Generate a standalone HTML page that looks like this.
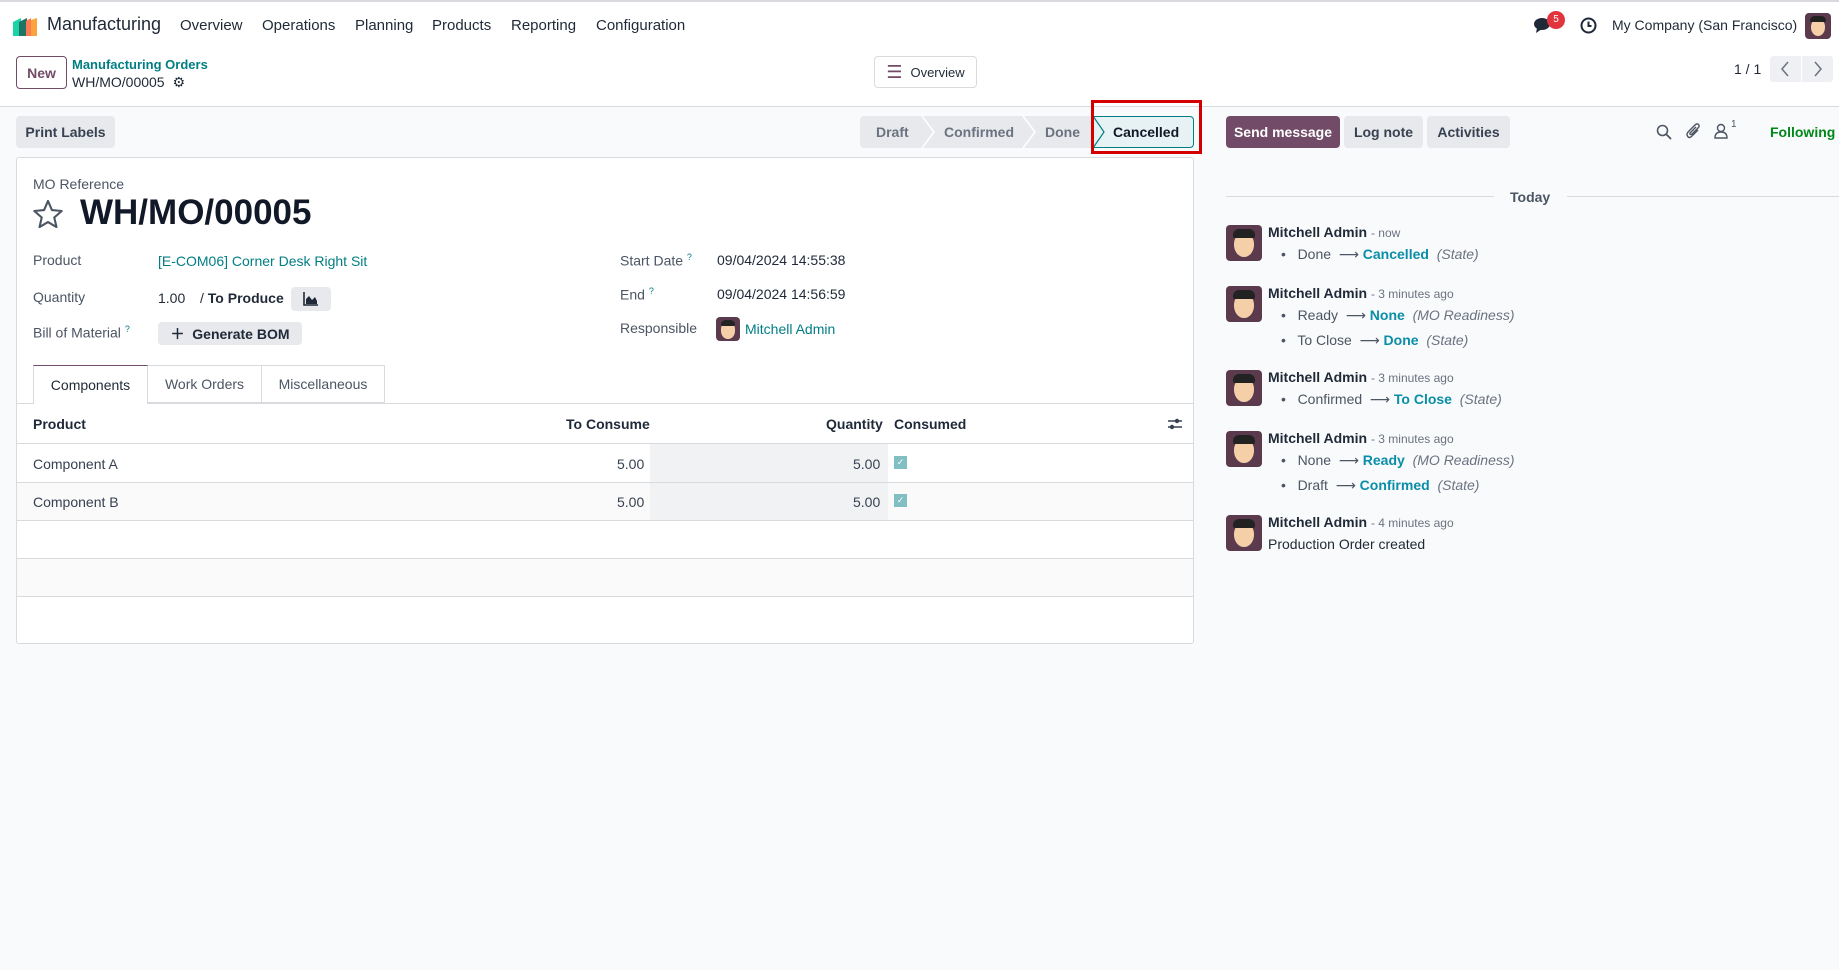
<!DOCTYPE html>
<html><head><meta charset="utf-8"><style>
*{box-sizing:border-box;margin:0;padding:0}
body{width:1839px;height:970px;overflow:hidden;font-family:"Liberation Sans","DejaVu Sans",sans-serif;font-size:14px;color:#374151;background:#f9fafb;position:relative}
.a{position:absolute;white-space:nowrap}
.top{position:absolute;left:0;top:0;width:1839px;height:107px;background:#fff;border-top:2px solid #d8dadd;border-bottom:1px solid #d8dadd}
.nav{top:17px;font-size:15px;color:#1f2937}
.btn{position:absolute;background:#e7e9ed;border-radius:4px;font-weight:bold;color:#374151;display:flex;align-items:center;justify-content:center;font-size:14px}
.link{color:#017e84}
.lbl{color:#4b5563;font-size:14px}
.sheet{position:absolute;left:16px;top:157px;width:1178px;height:487px;background:#fff;border:1px solid #d8dadd;border-radius:3px}
.hl{position:absolute;left:16px;width:1178px;height:1px;background:#d8dadd}
.av{position:absolute;width:36px;height:36px;border-radius:4px;background:#5b3a4e;overflow:hidden}
.av:after{content:"";position:absolute;left:22%;top:22%;width:56%;height:68%;border-radius:45% 45% 50% 50%;background:#f4cfa8}
.av:before{content:"";position:absolute;left:19%;top:11%;width:62%;height:25%;border-radius:6px 6px 2px 2px;background:#222;z-index:2}
.nm{font-weight:bold;color:#1f2937}
.tm{color:#6b7280}
.bl{color:#4b5563}
.bl b{color:#0a8ea8}
.bl i{color:#6b7280}
</style></head><body>
<div class="top"></div>
<svg class="a" style="left:13px;top:16px" width="28" height="20" viewBox="0 0 28 20"><path d="M0 6 L8 2 V20 H0Z" fill="#1ad3a7"/><path d="M6 6 L14 2 V20 H6Z" fill="#1e7464"/><path d="M13 5 L18 2 V20 H13Z" fill="#f97b51"/><path d="M18 4 L24 2 V20 H18Z" fill="#fca33d"/></svg>
<div class="a" style="left:47px;top:14px;font-size:18px;color:#1f2937">Manufacturing</div>
<div class="a nav" style="left:180px">Overview</div>
<div class="a nav" style="left:262px">Operations</div>
<div class="a nav" style="left:355px">Planning</div>
<div class="a nav" style="left:432px">Products</div>
<div class="a nav" style="left:511px">Reporting</div>
<div class="a nav" style="left:596px">Configuration</div>
<svg class="a" style="left:1534px;top:17px" width="20" height="17" viewBox="0 0 20 17"><ellipse cx="8" cy="7" rx="8" ry="6" fill="#1f2937"/><path d="M3 11 L2 16 L8 12Z" fill="#1f2937"/></svg>
<div class="a" style="left:1547px;top:11px;width:18px;height:18px;border-radius:9px;background:#e2343d;color:#fff;font-size:10px;text-align:center;line-height:18px">5</div>
<svg class="a" style="left:1580px;top:17px" width="17" height="17" viewBox="0 0 17 17"><circle cx="8.5" cy="8.5" r="7" fill="none" stroke="#1f2937" stroke-width="2"/><path d="M8.5 4.5V9H11.5" fill="none" stroke="#1f2937" stroke-width="2"/></svg>
<div class="a" style="left:1612px;top:17px;font-size:14px;color:#1f2937">My Company (San Francisco)</div>
<div class="av" style="left:1805px;top:13px;width:26px;height:26px"></div>
<div class="a" style="left:16px;top:56px;width:51px;height:33px;border:1px solid #714b67;border-radius:4px;color:#714b67;font-weight:bold;display:flex;align-items:center;justify-content:center">New</div>
<div class="a link" style="left:72px;top:57px;font-size:13px;font-weight:bold">Manufacturing Orders</div>
<div class="a" style="left:72px;top:74px;font-size:14px;color:#1f2937">WH/MO/00005 <span style="font-size:14px;margin-left:4px">⚙</span></div>
<div class="a" style="left:874px;top:56px;width:103px;height:32px;border:1px solid #d8dadd;border-radius:4px;background:#fff;font-size:13px;color:#1f2937;display:flex;align-items:center;justify-content:center"><span style="color:#714b67;font-size:18px;margin-right:8px">☰</span>Overview</div>
<div class="a" style="left:1734px;top:61px;font-size:14px;color:#1f2937">1 / 1</div>
<div class="a" style="left:1770px;top:56px;width:63px;height:26px;background:#eef0f3;border-radius:3px"></div>
<div class="a" style="left:1801px;top:56px;width:1px;height:26px;background:#fff"></div>
<svg class="a" style="left:1780px;top:61px" width="10" height="16"><path d="M8 1L2 8L8 15" fill="none" stroke="#6b7280" stroke-width="1.5"/></svg>
<svg class="a" style="left:1813px;top:61px" width="10" height="16"><path d="M2 1L8 8L2 15" fill="none" stroke="#6b7280" stroke-width="1.5"/></svg>
<div class="btn" style="left:16px;top:116px;width:99px;height:32px">Print Labels</div>
<div class="a" style="left:860px;top:116px;width:234px;height:32px;background:#e7e9ed;border-radius:4px 0 0 4px"></div>
<svg class="a" style="left:860px;top:116px" width="236" height="32"><path d="M62 0 L74 16 L62 32 M163 0 L175 16 L163 32" fill="none" stroke="#fff" stroke-width="1.5"/></svg>
<div class="a" style="left:876px;top:124px;color:#6b7280;font-weight:bold">Draft</div>
<div class="a" style="left:944px;top:124px;color:#6b7280;font-weight:bold">Confirmed</div>
<div class="a" style="left:1045px;top:124px;color:#6b7280;font-weight:bold">Done</div>
<div class="a" style="left:1092px;top:116px;width:102px;height:32px;background:#e6f2f3;border:1px solid #017e84;border-radius:0 4px 4px 0"></div>
<svg class="a" style="left:1092px;top:116px" width="14" height="32"><path d="M1 0 L12 16 L1 32" fill="none" stroke="#017e84" stroke-width="1.2"/></svg>
<div class="a" style="left:1113px;top:124px;color:#111827;font-weight:bold">Cancelled</div>
<div class="a" style="left:1091px;top:100px;width:111px;height:54px;border:3px solid #d40000"></div>
<div class="btn" style="left:1226px;top:116px;width:114px;height:32px;background:#714b67;color:#fff">Send message</div>
<div class="btn" style="left:1344px;top:116px;width:79px;height:32px">Log note</div>
<div class="btn" style="left:1427px;top:116px;width:83px;height:32px">Activities</div>
<svg class="a" style="left:1656px;top:124px" width="16" height="16" viewBox="0 0 16 16"><circle cx="6.5" cy="6.5" r="5" fill="none" stroke="#4b5563" stroke-width="1.6"/><path d="M10 10L15 15" stroke="#4b5563" stroke-width="1.8"/></svg>
<svg class="a" style="left:1686px;top:122px" width="16" height="18" viewBox="0 0 16 18"><path d="M12 8 L6 14 Q3 17 1.5 14 Q0 12 3 9 L9 3 Q11 1 12.5 2.5 Q14 4 12 6 L6 12 Q5 13 4.2 12.2 Q3.5 11.5 4.5 10.5 L10 5" fill="none" stroke="#4b5563" stroke-width="1.4"/></svg>
<svg class="a" style="left:1714px;top:123px" width="14" height="16" viewBox="0 0 14 16"><circle cx="7" cy="5" r="3.5" fill="none" stroke="#4b5563" stroke-width="1.4"/><path d="M1 15 Q1 9 7 9 Q13 9 13 15Z" fill="none" stroke="#4b5563" stroke-width="1.4"/></svg>
<div class="a" style="left:1731px;top:119px;font-size:10px;color:#4b5563">1</div>
<div class="a" style="left:1770px;top:124px;color:#008818;font-weight:bold">Following</div>
<div class="sheet"></div>
<div class="a lbl" style="left:33px;top:176px;font-size:14px">MO Reference</div>
<svg class="a" style="left:32px;top:199px" width="32" height="30" viewBox="0 0 24 23"><path d="M12 1.5 L15 8.5 L22.5 9.2 L16.8 14.2 L18.5 21.5 L12 17.7 L5.5 21.5 L7.2 14.2 L1.5 9.2 L9 8.5Z" fill="none" stroke="#4b5563" stroke-width="1.6" stroke-linejoin="round"/></svg>
<div class="a" style="left:80px;top:193px;font-size:35px;font-weight:bold;color:#111827">WH/MO/00005</div>
<div class="a lbl" style="left:33px;top:252px">Product</div>
<div class="a link" style="left:158px;top:253px">[E-COM06] Corner Desk Right Sit</div>
<div class="a lbl" style="left:33px;top:289px">Quantity</div>
<div class="a" style="left:158px;top:290px;color:#1f2937">1.00</div>
<div class="a" style="left:200px;top:290px;color:#1f2937">/ <b>To Produce</b></div>
<div class="btn" style="left:291px;top:287px;width:40px;height:24px"><svg width="16" height="14" viewBox="0 0 16 14"><path d="M1 0V13H15" fill="none" stroke="#1f2937" stroke-width="1.6"/><path d="M3 12V7L6 4L9 8L12 5L14 9V12Z" fill="#1f2937"/></svg></div>
<div class="a lbl" style="left:33px;top:324px">Bill of Material <sup style="color:#017e84;font-size:9px">?</sup></div>
<div class="btn" style="left:158px;top:322px;width:144px;height:23px;color:#1f2937">＋&nbsp; Generate BOM</div>
<div class="a lbl" style="left:620px;top:252px">Start Date <sup style="color:#017e84;font-size:9px">?</sup></div>
<div class="a" style="left:717px;top:252px;color:#1f2937">09/04/2024 14:55:38</div>
<div class="a lbl" style="left:620px;top:286px">End <sup style="color:#017e84;font-size:9px">?</sup></div>
<div class="a" style="left:717px;top:286px;color:#1f2937">09/04/2024 14:56:59</div>
<div class="a lbl" style="left:620px;top:320px">Responsible</div>
<div class="av" style="left:716px;top:317px;width:24px;height:24px"></div>
<div class="a link" style="left:745px;top:321px">Mitchell Admin</div>
<div class="hl" style="top:403px"></div>
<div class="a" style="left:33px;top:365px;width:115px;height:39px;background:#fff;border:1px solid #d8dadd;border-top:1px solid #714b67;border-bottom:none;color:#1f2937;display:flex;align-items:center;justify-content:center">Components</div>
<div class="a" style="left:148px;top:365px;width:114px;height:38px;border:1px solid #d8dadd;border-left:none;color:#4b5563;display:flex;align-items:center;justify-content:center">Work Orders</div>
<div class="a" style="left:262px;top:365px;width:123px;height:38px;border:1px solid #d8dadd;border-left:none;color:#4b5563;display:flex;align-items:center;justify-content:center">Miscellaneous</div>
<div class="a" style="left:33px;top:416px;font-weight:bold;color:#1f2937">Product</div>
<div class="a" style="left:566px;top:416px;font-weight:bold;color:#1f2937">To Consume</div>
<div class="a" style="left:826px;top:416px;font-weight:bold;color:#1f2937">Quantity</div>
<div class="a" style="left:894px;top:416px;font-weight:bold;color:#1f2937">Consumed</div>
<svg class="a" style="left:1167px;top:416px" width="16" height="16" viewBox="0 0 16 16"><path d="M1 5H15M1 11H15" stroke="#374151" stroke-width="1.5"/><circle cx="10" cy="5" r="2.2" fill="#374151"/><circle cx="5" cy="11" r="2.2" fill="#374151"/></svg>
<div class="hl" style="top:443px"></div>
<div class="a" style="left:17px;top:482px;width:1176px;height:38px;background:#fafafa"></div>
<div class="a" style="left:17px;top:558px;width:1176px;height:38px;background:#fafafa"></div>
<div class="a" style="left:650px;top:444px;width:238px;height:76px;background:#f1f2f4"></div>
<div class="hl" style="top:482px"></div>
<div class="hl" style="top:520px"></div>
<div class="hl" style="top:558px"></div>
<div class="hl" style="top:596px"></div>
<div class="a" style="left:33px;top:456px">Component A</div>
<div class="a" style="left:617px;top:456px">5.00</div>
<div class="a" style="left:853px;top:456px">5.00</div>
<div class="a" style="left:894px;top:456px;width:13px;height:13px;background:#80bfc2;color:#fff;font-size:9px;text-align:center;line-height:13px">✓</div>
<div class="a" style="left:33px;top:494px">Component B</div>
<div class="a" style="left:617px;top:494px">5.00</div>
<div class="a" style="left:853px;top:494px">5.00</div>
<div class="a" style="left:894px;top:494px;width:13px;height:13px;background:#80bfc2;color:#fff;font-size:9px;text-align:center;line-height:13px">✓</div>
<div class="a" style="left:1226px;top:196px;width:268px;height:1px;background:#d8dadd"></div>
<div class="a" style="left:1567px;top:196px;width:272px;height:1px;background:#d8dadd"></div>
<div class="a" style="left:1510px;top:189px;font-weight:bold;color:#4b5563">Today</div>

<div class="av" style="left:1226px;top:225px"></div>
<div class="a" style="left:1268px;top:224px"><span class="nm">Mitchell Admin</span> <span class="tm" style="font-size:12px">- now</span></div>
<div class="a bl" style="left:1281px;top:246px">•&nbsp;&nbsp; Done &nbsp;⟶ <b>Cancelled</b> &nbsp;<i>(State)</i></div>

<div class="av" style="left:1226px;top:286px"></div>
<div class="a" style="left:1268px;top:285px"><span class="nm">Mitchell Admin</span> <span class="tm" style="font-size:12px">- 3 minutes ago</span></div>
<div class="a bl" style="left:1281px;top:307px">•&nbsp;&nbsp; Ready &nbsp;⟶ <b>None</b> &nbsp;<i>(MO Readiness)</i></div>
<div class="a bl" style="left:1281px;top:332px">•&nbsp;&nbsp; To Close &nbsp;⟶ <b>Done</b> &nbsp;<i>(State)</i></div>

<div class="av" style="left:1226px;top:370px"></div>
<div class="a" style="left:1268px;top:369px"><span class="nm">Mitchell Admin</span> <span class="tm" style="font-size:12px">- 3 minutes ago</span></div>
<div class="a bl" style="left:1281px;top:391px">•&nbsp;&nbsp; Confirmed &nbsp;⟶ <b>To Close</b> &nbsp;<i>(State)</i></div>

<div class="av" style="left:1226px;top:431px"></div>
<div class="a" style="left:1268px;top:430px"><span class="nm">Mitchell Admin</span> <span class="tm" style="font-size:12px">- 3 minutes ago</span></div>
<div class="a bl" style="left:1281px;top:452px">•&nbsp;&nbsp; None &nbsp;⟶ <b>Ready</b> &nbsp;<i>(MO Readiness)</i></div>
<div class="a bl" style="left:1281px;top:477px">•&nbsp;&nbsp; Draft &nbsp;⟶ <b>Confirmed</b> &nbsp;<i>(State)</i></div>

<div class="av" style="left:1226px;top:515px"></div>
<div class="a" style="left:1268px;top:514px"><span class="nm">Mitchell Admin</span> <span class="tm" style="font-size:12px">- 4 minutes ago</span></div>
<div class="a" style="left:1268px;top:536px;color:#1f2937">Production Order created</div>
</body></html>
